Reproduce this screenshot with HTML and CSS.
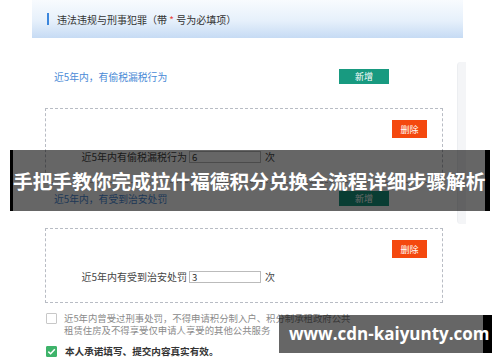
FILE: index.html
```html
<!DOCTYPE html>
<html lang="zh">
<head>
<meta charset="utf-8">
<link rel="stylesheet" href="styles.css">
</head>
<body>
<div class="page">
  <div class="form">
    <div class="header"><span class="marker"></span><span>违法违规与刑事犯罪（带 <span class="req">*</span> 号为必填项）</span></div>
    <div class="body">
      <div class="main">
        <div class="qrow q1"><span class="qtext">近5年内，有偷税漏税行为</span><span class="btn-add">新增</span></div>
        <div class="box">
          <div class="box-top"><span class="btn-del">删除</span></div>
          <div class="field"><span class="flabel">近5年内有偷税漏税行为</span><span class="finput">6</span><span class="unit">次</span></div>
        </div>
        <div class="qrow q2"><span class="qtext">近5年内，有受到治安处罚</span><span class="btn-add">新增</span></div>
        <div class="box">
          <div class="box-top"><span class="btn-del">删除</span></div>
          <div class="field"><span class="flabel">近5年内有受到治安处罚</span><span class="finput">3</span><span class="unit">次</span></div>
        </div>
        <div class="check-row"><span class="cb"></span><span class="ctext">近5年内曾受过刑事处罚，不得申请积分制入户、积分制承租政府公共<br>租赁住房及不得享受仅申请人享受的其他公共服务</span></div>
        <div class="check-row agree"><span class="cb checked"><svg viewBox="0 0 11 11" width="11" height="11"><path d="M2.3 5.6 L4.6 7.8 L8.8 3.3" fill="none" stroke="#fff" stroke-width="1.5"/></svg></span><span class="atext">本人承诺填写、提交内容真实有效。</span></div>
      </div>
      <div class="side"></div>
    </div>
  </div>
  <div class="banner">手把手教你完成拉什福德积分兑换全流程详细步骤解析</div>
  <div class="url">www.cdn-kaiyunty.com</div>
</div>
</body>
</html>
```

FILE: styles.css
```css
html, body { margin: 0; padding: 0; background: #fff; }
.page {
  position: relative;
  width: 500px;
  height: 362px;
  overflow: hidden;
  font-family: "Noto Sans CJK SC", "Noto Sans", sans-serif;
  color: #333;
}
.form { margin-left: 32px; width: 434px; }
.header {
  width: 431px;
  height: 38px;
  box-sizing: border-box;
  padding-left: 15px;
  display: flex;
  align-items: center;
  font-size: 10px;
  color: #333;
  background: linear-gradient(#f8fbfe, #e6f0fb 55%, #c6dbf4);
}
.marker { width: 2px; height: 12px; background: #3b86dc; margin-right: 8px; }
.req { color: #e8443a; }
.body { display: flex; }
.main { width: 425px; }
.side {
  width: 8px;
  height: 162px;
  margin-top: 24px;
  background: #f4f5f7;
  border-left: 1px solid #eceef1;
  border-radius: 4px 0 0 4px;
}
.qrow {
  display: flex;
  align-items: center;
  justify-content: space-between;
  height: 15px;
  padding-left: 22px;
  width: 335px;
}
.q1 { margin-top: 31px; margin-bottom: 24px; }
.q2 { margin-top: 8px; margin-bottom: 22px; }
.qtext { font-size: 9.8px; color: #4a8ad6; }
.btn-add {
  width: 50px;
  height: 15px;
  background: #189a80;
  color: #fff;
  font-size: 9px;
  display: flex;
  align-items: center;
  justify-content: center;
}
.box {
  margin-left: 13px;
  width: 398px;
  box-sizing: border-box;
  border: 1px dashed #b8bcc4;
  padding: 11px 15px 19px 0;
}
.box-top { display: flex; justify-content: flex-end; }
.btn-del {
  width: 35px;
  height: 18px;
  background: #f4480e;
  color: #fff;
  font-size: 9px;
  display: flex;
  align-items: center;
  justify-content: center;
}
.field { display: flex; align-items: center; height: 13px; margin-top: 12px; }
.flabel { width: 141px; text-align: right; font-size: 10px; color: #444; }
.finput {
  margin-left: 2px;
  width: 72px;
  height: 12px;
  box-sizing: border-box;
  border: 1px solid #bbb;
  font-size: 9.5px;
  line-height: 10px;
  padding-left: 2px;
  color: #333;
}
.unit { margin-left: 4px; font-size: 10px; color: #444; }
.check-row { display: flex; align-items: flex-start; margin-left: 14px; margin-top: 10px; }
.cb {
  width: 11px;
  height: 11px;
  box-sizing: border-box;
  border: 1px solid #c8c8c8;
  border-radius: 1px;
  flex: none;
  display: flex;
}
.cb.checked { background: #3eb36a; border-color: #3eb36a; }
.cb.checked svg { margin: -1px; }
.ctext { margin-left: 7px; font-size: 9.4px; line-height: 12px; color: #8a8a8a; margin-top: -1px; white-space: nowrap; }
.agree { margin-top: 8px; align-items: center; }
.atext { margin-left: 8px; font-size: 9.6px; font-weight: bold; color: #333; }
.banner {
  position: absolute;
  left: 10px;
  top: 150px;
  width: 480px;
  height: 61px;
  box-sizing: border-box;
  border-left: 3px solid #000;
  border-right: 5px solid #000;
  background: rgba(0, 0, 0, 0.6);
  color: #fff;
  font-size: 19.7px;
  font-weight: bold;
  line-height: 61px;
  white-space: nowrap;
  letter-spacing: 0;
}
.url {
  position: absolute;
  left: 279px;
  top: 315px;
  width: 213px;
  height: 38px;
  box-sizing: border-box;
  border-right: 9px solid #000;
  background: rgba(0, 0, 0, 0.6);
  color: #fff;
  font-family: "Open Sans", "Noto Sans", sans-serif;
  font-weight: bold;
  font-size: 17px;
  line-height: 38px;
  padding-left: 10px;
  white-space: nowrap;
}
```
